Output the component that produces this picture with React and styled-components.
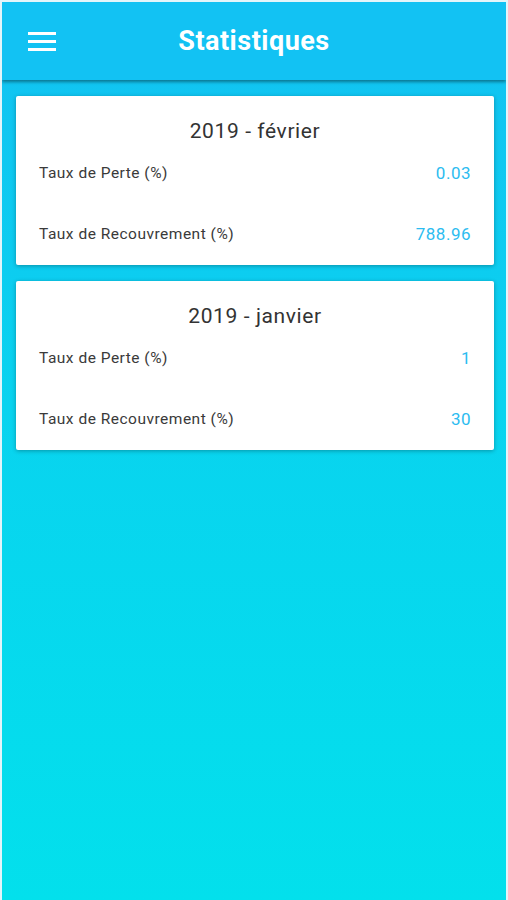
import styled, { createGlobalStyle } from "styled-components";

const GlobalStyle = createGlobalStyle`
  * {
    box-sizing: border-box;
  }
  body {
    margin: 0;
    font-family: Roboto, "Liberation Sans", sans-serif;
  }
`;

const Screen = styled.div`
  width: 508px;
  height: 900px;
  border: 2px solid #e3f5fa;
  border-bottom: none;
  background: linear-gradient(180deg, #13c1f2 0%, #09d3ef 45%, #03e0ec 100%);
  overflow: hidden;
`;

const Header = styled.header`
  position: relative;
  height: 78px;
  background: #12c2f3;
  display: flex;
  align-items: center;
  justify-content: center;
  box-shadow: 0 2px 3px rgba(0, 0, 0, 0.4);
`;

const MenuButton = styled.button`
  position: absolute;
  left: 25px;
  top: 27px;
  width: 30px;
  height: 24px;
  padding: 0;
  border: none;
  background: transparent;
  display: flex;
  align-items: center;
  justify-content: center;
`;

const Title = styled.h1`
  margin: 0;
  color: #fff;
  font-size: 27px;
  font-weight: 700;
  letter-spacing: 0.5px;
  line-height: 30px;
  margin-top: -1px;
`;

const List = styled.main`
  display: flex;
  flex-direction: column;
  gap: 16px;
  padding: 16px 12px 0 14px;
`;

const Card = styled.section`
  background: #fff;
  border-radius: 2px;
  box-shadow: 0 1px 4px rgba(0, 0, 0, 0.3);
  padding: 22px 23px 0 23px;
`;

const CardTitle = styled.h2`
  margin: 0;
  text-align: center;
  font-size: 21px;
  font-weight: 400;
  letter-spacing: 0.6px;
  line-height: 26px;
  color: #333;
`;

const Row = styled.div`
  display: flex;
  align-items: center;
  justify-content: space-between;
  height: ${(p) => p.$h}px;
`;

const Label = styled.span`
  font-size: 15.5px;
  letter-spacing: 0.5px;
  color: #3a3a3a;
`;

const Value = styled.span`
  font-size: 17px;
  letter-spacing: 0.5px;
  color: #2cbcf0;
`;

const stats = [
  { title: "2019 - février", perte: "0.03", recouvrement: "788.96" },
  { title: "2019 - janvier", perte: "1", recouvrement: "30" },
];

const MenuIcon = () => (
  <svg width="28" height="21" viewBox="0 0 28 21">
    <rect x="0" y="1" width="28" height="3" fill="#fff" />
    <rect x="0" y="9" width="28" height="3" fill="#fff" />
    <rect x="0" y="17" width="28" height="3" fill="#fff" />
  </svg>
);

const App = () => {
  return (
    <>
      <GlobalStyle />
      <Screen>
        <Header>
          <MenuButton aria-label="menu">
            <MenuIcon />
          </MenuButton>
          <Title>Statistiques</Title>
        </Header>
        <List>
          {stats.map((s) => (
            <Card key={s.title}>
              <CardTitle>{s.title}</CardTitle>
              <Row $h={58}>
                <Label>Taux de Perte (%)</Label>
                <Value>{s.perte}</Value>
              </Row>
              <Row $h={63}>
                <Label>Taux de Recouvrement (%)</Label>
                <Value>{s.recouvrement}</Value>
              </Row>
            </Card>
          ))}
        </List>
      </Screen>
    </>
  );
};

export default App;
